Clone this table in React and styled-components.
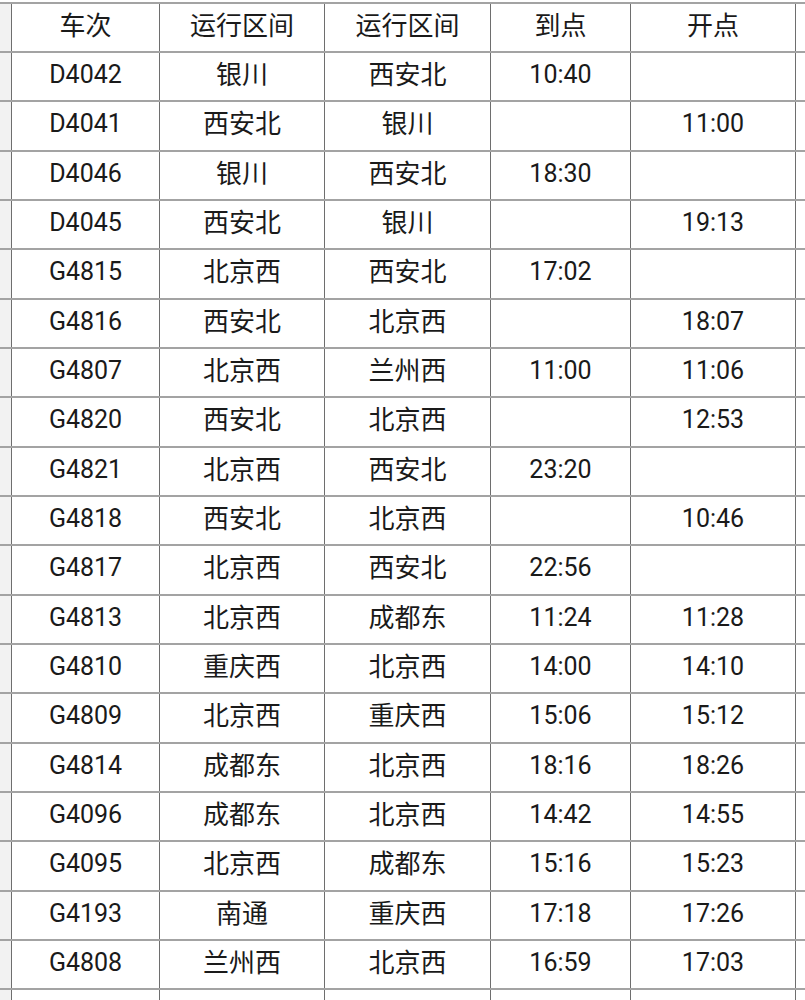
import React from "react";
import styled, { createGlobalStyle } from "styled-components";

const Global = createGlobalStyle`
  html, body { margin: 0; padding: 0; background: #fff; }
  body { font-family: Roboto, "Noto Sans CJK SC", sans-serif; }
`;

const Sheet = styled.div`
  width: 805px;
  height: 1000px;
  overflow: hidden;
  padding-top: 2px;
  box-sizing: border-box;
  background: #fff;
`;

const Row = styled.div`
  display: grid;
  grid-template-columns: 12px 148px 165px 166px 140px 165px 1fr;
  height: ${(p) => p.$h}px;
  box-sizing: border-box;
  border-top: 2px solid #a3a3a3;
`;

const Cell = styled.div`
  display: flex;
  align-items: center;
  justify-content: center;
  box-sizing: border-box;
  border-right: 1.5px solid #6e6e6e;
  font-size: ${(p) => (p.$cjk ? 26 : 25)}px;
  color: #1a1a1a;
  padding-bottom: ${(p) => (p.$cjk ? 8 : 4)}px;
  white-space: nowrap;
`;

const Stub = styled.div`
  background: #f2f2f2;
  border-right: 1.5px solid #6e6e6e;
  box-sizing: border-box;
`;

const Tail = styled.div`
  background: #fff;
`;

const header = ["车次", "运行区间", "运行区间", "到点", "开点"];

const rows = [
  ["D4042", "银川", "西安北", "10:40", ""],
  ["D4041", "西安北", "银川", "", "11:00"],
  ["D4046", "银川", "西安北", "18:30", ""],
  ["D4045", "西安北", "银川", "", "19:13"],
  ["G4815", "北京西", "西安北", "17:02", ""],
  ["G4816", "西安北", "北京西", "", "18:07"],
  ["G4807", "北京西", "兰州西", "11:00", "11:06"],
  ["G4820", "西安北", "北京西", "", "12:53"],
  ["G4821", "北京西", "西安北", "23:20", ""],
  ["G4818", "西安北", "北京西", "", "10:46"],
  ["G4817", "北京西", "西安北", "22:56", ""],
  ["G4813", "北京西", "成都东", "11:24", "11:28"],
  ["G4810", "重庆西", "北京西", "14:00", "14:10"],
  ["G4809", "北京西", "重庆西", "15:06", "15:12"],
  ["G4814", "成都东", "北京西", "18:16", "18:26"],
  ["G4096", "成都东", "北京西", "14:42", "14:55"],
  ["G4095", "北京西", "成都东", "15:16", "15:23"],
  ["G4193", "南通", "重庆西", "17:18", "17:26"],
  ["G4808", "兰州西", "北京西", "16:59", "17:03"],
];

const isCjk = (s) => /[\u4e00-\u9fff]/.test(s);

function Line({ cells, h }) {
  return (
    <Row $h={h}>
      <Stub />
      {cells.map((c, i) => (
        <Cell key={i} $cjk={isCjk(c)}>
          {c}
        </Cell>
      ))}
      <Tail />
    </Row>
  );
}

export default function App() {
  const all = [header, ...rows];
  return (
    <>
      <Global />
      <Sheet>
        {all.map((r, i) => (
          <Line key={i} cells={r} h={i === 0 ? 49 : 49.33} />
        ))}
        <Line cells={["", "", "", "", ""]} h={30} />
      </Sheet>
    </>
  );
}
